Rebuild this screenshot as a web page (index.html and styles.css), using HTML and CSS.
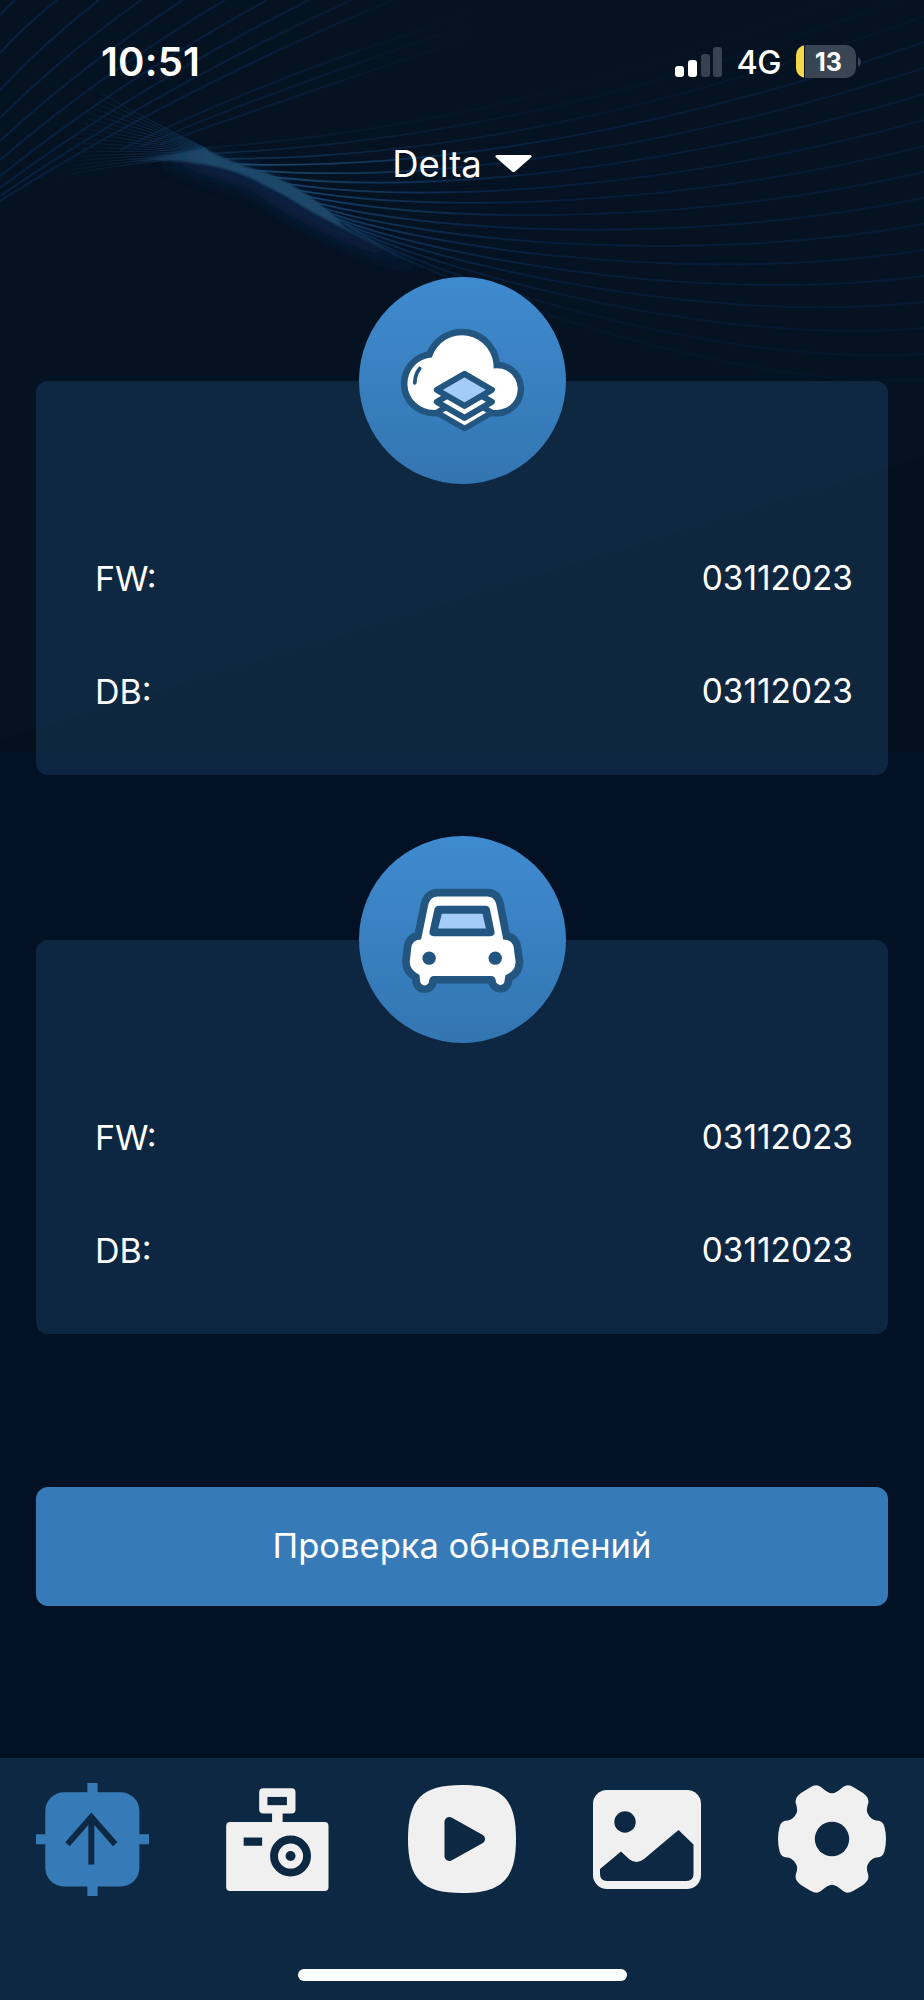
FILE: index.html
```html
<!DOCTYPE html>
<html lang="ru">
<head>
    <meta charset="UTF-8">
    <meta name="viewport" content="width=device-width, initial-scale=1.0">
    <title>Delta</title>
    <link rel="stylesheet" href="styles.css">
</head>
<body>
<svg class="backdrop" viewBox="0 0 924 752" width="924" height="752">
    <defs>
        <linearGradient id="fadeRight" gradientUnits="userSpaceOnUse" x1="220" y1="0" x2="924" y2="0">
            <stop offset="0" stop-color="#1d4e78"/>
            <stop offset="0.15" stop-color="#143c63"/>
            <stop offset="0.35" stop-color="#092649"/>
            <stop offset="0.5" stop-color="#061d3a"/>
            <stop offset="1" stop-color="#051a32"/>
        </linearGradient>
        <linearGradient id="fadeLeft" gradientUnits="userSpaceOnUse" x1="0" y1="0" x2="480" y2="0">
            <stop offset="0" stop-color="#07203f"/>
            <stop offset="0.5" stop-color="#071e3a"/>
            <stop offset="1" stop-color="#051222"/>
        </linearGradient>
        <linearGradient id="fadeMesh" gradientUnits="userSpaceOnUse" x1="50" y1="0" x2="208" y2="0">
            <stop offset="0" stop-color="#051222"/>
            <stop offset="1" stop-color="#174067"/>
        </linearGradient>
        <linearGradient id="lens" gradientUnits="userSpaceOnUse" x1="125" y1="0" x2="440" y2="0">
            <stop offset="0" stop-color="#1c4668" stop-opacity="0.2"/>
            <stop offset="0.25" stop-color="#1c4668"/>
            <stop offset="0.65" stop-color="#1c4668"/>
            <stop offset="1" stop-color="#1c4668" stop-opacity="0.1"/>
        </linearGradient>
        <filter id="soft" x="-20%" y="-20%" width="140%" height="140%"><feGaussianBlur stdDeviation="1"/></filter>
        <filter id="glow" x="-40%" y="-40%" width="180%" height="180%"><feGaussianBlur stdDeviation="8"/></filter>
    </defs>
    <rect width="924" height="752" fill="#051222"/>
    <path d="M924 457L0 740V752H924Z" fill="#03111e"/>
    <path d="M160 160Q215 145 270 178L420 268Q330 245 250 190Z" fill="#08284e" opacity="0.8" filter="url(#glow)"/>
    <g id="rays" fill="none" stroke="url(#fadeLeft)" stroke-width="2"></g>
    <g id="mesh" fill="none" stroke="url(#fadeMesh)" stroke-width="1"></g>
    <g id="waves" fill="none" stroke="url(#fadeRight)" stroke-width="1.8"></g>
    <path d="M125 161Q170 155 204 148Q235 165 265 172Q310 190 345 227L440 278L350 232L310 211Q285 195 260 183Q215 157 125 161Z" fill="url(#lens)" filter="url(#soft)"/>
</svg>

<header class="status-bar">
    <div class="time">10:51</div>
    <div class="status-icons">
        <div class="signal">
            <span class="bar bar-1"></span>
            <span class="bar bar-2"></span>
            <span class="bar bar-3 off"></span>
            <span class="bar bar-4 off"></span>
        </div>
        <span class="network">4G</span>
        <div class="battery"><span>13</span></div>
        <svg class="battery-cap" width="5" height="10" viewBox="0 0 5 10"><path d="M1 0Q4 2 4 5T1 10Z" fill="#3a4553"/></svg>
    </div>
</header>

<div class="device-select">
    <span>Delta</span>
    <svg width="37" height="18" viewBox="0 0 37 18"><path d="M1.500 0H35.500Q37.500 1 36 2.500L20 16.500Q18.500 18 17 16.500L1 2.500Q-.5 1 1.500 0Z" fill="#fff"/></svg>
</div>

<main class="content">
    <section class="card">
        <svg class="card-icon" viewBox="26 21 620 620">
            <defs>
                <linearGradient id="disc" x1="0" y1="0" x2="0" y2="1">
                    <stop offset="0" stop-color="#3f8bcf"/>
                    <stop offset="1" stop-color="#3375b1"/>
                </linearGradient>
            </defs>
            <circle cx="336" cy="331" r="310" fill="url(#disc)"/>
            <g stroke="#22557f" stroke-linejoin="round" stroke-linecap="round">
                <path d="M250 419A78.600 78.600 0 0 1 244 262A94.700 94.700 0 0 1 429 295A62.400 62.400 0 1 1 440 419Z" fill="#fff" stroke-width="39" paint-order="stroke"/>
                <path d="M208 295Q194 312 193 338" fill="none" stroke-width="11"/>
                <path d="M342 379L424 427L342 475L259 427Z" fill="#fff" stroke-width="17"/>
                <path d="M342 347L424 395L342 443L259 395Z" fill="#fff" stroke-width="18"/>
                <path d="M342 311L424 359L342 407L259 359Z" fill="#a3cdf8" stroke-width="18"/>
            </g>
        </svg>
        <div class="row"><span>FW:</span><span class="value">03112023</span></div>
        <div class="row"><span>DB:</span><span class="value">03112023</span></div>
    </section>

    <section class="card">
        <svg class="card-icon" viewBox="26 18 620 620">
            <circle cx="336" cy="328" r="310" fill="url(#disc)"/>
            <path d="M262 199H410Q432 200 437 222L458 328Q484 328 489 350L495 395Q495 424 465 434L462 450A13 13 0 0 1 436 452Q434 437 422 437H250Q238 437 236 452A13 13 0 0 1 209 452L207 434Q178 420 178 395L183 350Q188 328 212 328L234 222Q240 200 262 199Z" fill="#fff" stroke="#22557f" stroke-width="46" stroke-linejoin="round" paint-order="stroke"/>
            <path d="M265 227H405Q415 227 418 237L432 305Q433 318 420 318H250Q236 318 237 305L252 237Q255 227 265 227Z" fill="#22557f"/>
            <path d="M274 251H396L406 295H263Z" fill="#a3cdf8"/>
            <circle cx="236" cy="384" r="20" fill="#22557f"/>
            <circle cx="434" cy="384" r="20" fill="#22557f"/>
        </svg>
        <div class="row"><span>FW:</span><span class="value">03112023</span></div>
        <div class="row"><span>DB:</span><span class="value">03112023</span></div>
    </section>

    <button class="update-button">Проверка обновлений</button>
</main>

<footer class="bottom">
    <nav class="tabs">
        <a class="tab">
            <svg width="113" height="113" viewBox="107 96 341 341">
                <path d="M262 96H293V437H262ZM107 251H448V281H107Z" fill="#367bb8"/>
                <rect x="135" y="124" width="284" height="284" rx="56" fill="#367bb8"/>
                <path d="M274 342V200M202 281L274 199L346 281" fill="none" stroke="#0d2843" stroke-width="18"/>
            </svg>
        </a>
        <a class="tab">
            <svg width="103" height="103" viewBox="677 110 311 312">
                <g fill="#f0f0f0">
                    <rect x="777" y="111" width="110" height="76" rx="12"/>
                    <rect x="816" y="180" width="32" height="40"/>
                    <rect x="677" y="213" width="310" height="209" rx="12"/>
                </g>
                <g fill="#0d2843">
                    <rect x="802" y="137" width="59" height="25"/>
                    <rect x="730" y="260" width="56" height="25"/>
                    <circle cx="872" cy="316" r="15"/>
                </g>
                <circle cx="872" cy="316" r="50" fill="none" stroke="#0d2843" stroke-width="24"/>
            </svg>
        </a>
        <a class="tab">
            <svg width="108" height="108" viewBox="0 0 108 108">
                <path d="M54 0C94 0 108 14 108 54S94 108 54 108 0 94 0 54 14 0 54 0Z" fill="#f0f0f0"/>
                <path d="M41.500 37L72 54L41.500 71Z" fill="#0d2843" stroke="#0d2843" stroke-width="10" stroke-linejoin="round"/>
            </svg>
        </a>
        <a class="tab">
            <svg width="108" height="99" viewBox="0 0 108 99">
                <rect width="108" height="99" rx="14" fill="#f0f0f0"/>
                <circle cx="32" cy="32" r="10.700" fill="#0d2843"/>
                <path d="M7 79L28 61.500L36 69Q43.500 75 51 69L85.500 40L100.500 54.500V84Q100.500 91 93.500 91H14Q7 91 7 84Z" fill="#0d2843"/>
            </svg>
        </a>
        <a class="tab">
            <svg width="108" height="108" viewBox="0 0 108 108">
                <path d="M32 2.500Q38 -1.500 43 2Q50 8.300 54 8.300Q58 8.300 65 2Q70 -1.500 76 2.500L85 8Q92 13 90 19Q88 25 89.500 28Q92 34 98 35.500Q105 35 106.500 42Q109.500 54 106.500 66Q105 73 98 72.500Q92 74 89.500 80Q88 83 90 89Q92 95 85 100L76 105.500Q70 109.500 65 106Q58 99.700 54 99.700Q50 99.700 43 106Q38 109.500 32 105.500L23 100Q16 95 18 89Q20 83 18.500 80Q16 74 10 72.500Q3 73 1.500 66Q-1.500 54 1.500 42Q3 35 10 35.500Q16 34 18.500 28Q20 25 18 19Q16 13 23 8Z" fill="#f0f0f0"/>
                <circle cx="54" cy="54" r="17.200" fill="#0d2843"/>
            </svg>
        </a>
    </nav>
    <div class="home-indicator"></div>
</footer>

<script src="waves.js"></script>
</body>
</html>
```
FILE: styles.css
```css
body {
    font-family: Inter, "Liberation Sans", sans-serif;
    background-color: #021124;
    color: #fff;
    margin: 0;
    width: 924px;
    height: 2000px;
    display: flex;
    flex-direction: column;
    overflow: hidden;
}

/* Decorative waves behind the page */
.backdrop {
    position: absolute;
    top: 0;
    left: 0;
    z-index: -1;
}

.status-bar {
    display: flex;
    justify-content: space-between;
    align-items: center;
    height: 123px;
    padding: 0 62px 0 101px;
    box-sizing: border-box;
}

.time {
    font-size: 40px;
    font-weight: 600;
    letter-spacing: 0.2px;
}

.status-icons {
    display: flex;
    align-items: center;
}

.signal {
    display: flex;
    align-items: flex-end;
    gap: 3.7px;
    height: 30px;
    margin-right: 14px;
}

.bar {
    width: 9px;
    border-radius: 3px;
    background-color: #fff;
}

.bar.off {
    background-color: #374250;
}

.bar-1 { height: 11px; }
.bar-2 { height: 17px; }
.bar-3 { height: 23px; }
.bar-4 { height: 30px; }

.network {
    font-size: 32.5px;
    font-weight: 500;
    letter-spacing: -0.5px;
    margin-right: 15px;
    padding-top: 2px;
}

.battery {
    width: 60px;
    height: 33px;
    border-radius: 10px;
    background: linear-gradient(to right, #f8d64a 8px, #051222 8px, #051222 9px, #3a4553 9px);
    display: flex;
    align-items: center;
    justify-content: center;
    font-size: 25px;
    font-weight: 700;
    text-indent: 5px;
}

.battery-cap {
    margin-left: 1px;
}

.device-select {
    display: flex;
    align-items: center;
    justify-content: center;
    gap: 13px;
    height: 82px;
    font-size: 36.5px;
}

.content {
    flex: 1;
    display: flex;
    flex-direction: column;
    padding: 176px 36px 0;
}

.card {
    height: 394px;
    margin-bottom: 165px;
    border-radius: 12px;
    background-color: rgba(55, 125, 186, 0.21);
    display: flex;
    flex-direction: column;
}

.card-icon {
    width: 207px;
    height: 207px;
    margin: -104px auto 38px;
    flex-shrink: 0;
}

.row {
    display: flex;
    justify-content: space-between;
    align-items: center;
    height: 113px;
    padding: 0 35px 0 59px;
    font-size: 34px;
}

.value {
    font-size: 33.4px;
    padding-bottom: 2px;
}

.update-button {
    height: 119px;
    margin-top: -12px;
    border: none;
    border-radius: 12px;
    background-color: #367bb8;
    color: #fff;
    font-family: inherit;
    font-size: 34.5px;
    padding-bottom: 3px;
}

.bottom {
    height: 242px;
    background-color: #0d2843;
}

.tabs {
    display: flex;
    height: 162px;
}

.tab {
    flex: 1;
    display: flex;
    align-items: center;
    justify-content: center;
}

.home-indicator {
    width: 329px;
    height: 12px;
    margin: 49px auto 0;
    border-radius: 6px;
    background-color: #fff;
}
```
FILE: waves.js
```js
const SVG_NS = 'http://www.w3.org/2000/svg';

function addLine(groupId, d, opacity) {
    const path = document.createElementNS(SVG_NS, 'path');
    path.setAttribute('d', d);
    path.setAttribute('opacity', opacity);
    document.getElementById(groupId).appendChild(path);
}

// right side: fan that dips and rises towards the edge
const middle = [112, 125, 140, 153, 167, 180, 192, 203, 214, 225, 235, 244, 253, 261, 269, 277, 284];
middle.forEach((ym, i) => {
    const xs = 205 + i * 10;
    const ys = 148 + i * 5.4;
    const x1 = 440 - (xs - 240) * 0.62;
    const ye = -36 + i * 26;
    const y2 = 180 + (ye - 111) * 0.78;
    const y1 = (ym - 0.275 * ys - 0.043 * ye - 0.239 * y2) / 0.444;
    const opacity = i < 3 ? 0.15 + i * 0.2 : i > 12 ? 1 - (i - 12) * 0.16 : 1;
    addLine('waves', `M${xs} ${ys}C${x1} ${y1} 680 ${y2} 924 ${ye}`, opacity);
});

// upper left: rays leaving through the top edge
const left = [15, 53, 90, 118, 141, 160, 176, 188, 196, 201];
left.forEach((y, i) => {
    const x = 15 + i * 42;
    addLine('rays', `M0 ${y}Q${x * 0.44} ${y * 0.5 - i} ${x} 0`, 1);
});
[10, 22, 34].forEach((y, i) => {
    addLine('rays', `M${120 + i * 20} ${150 - i * 3}Q260 ${80 + i * 14} 480 ${y}`, 0.9);
});

// thin mesh running into the crossing point
for (let i = 0; i < 18; i++) {
    addLine('mesh', `M${50 + i * 3} ${178 - i * 5}Q${130 + i} ${161 - i * 2.4} 208 ${157 - i * 0.45}`, 0.7);
}
```
